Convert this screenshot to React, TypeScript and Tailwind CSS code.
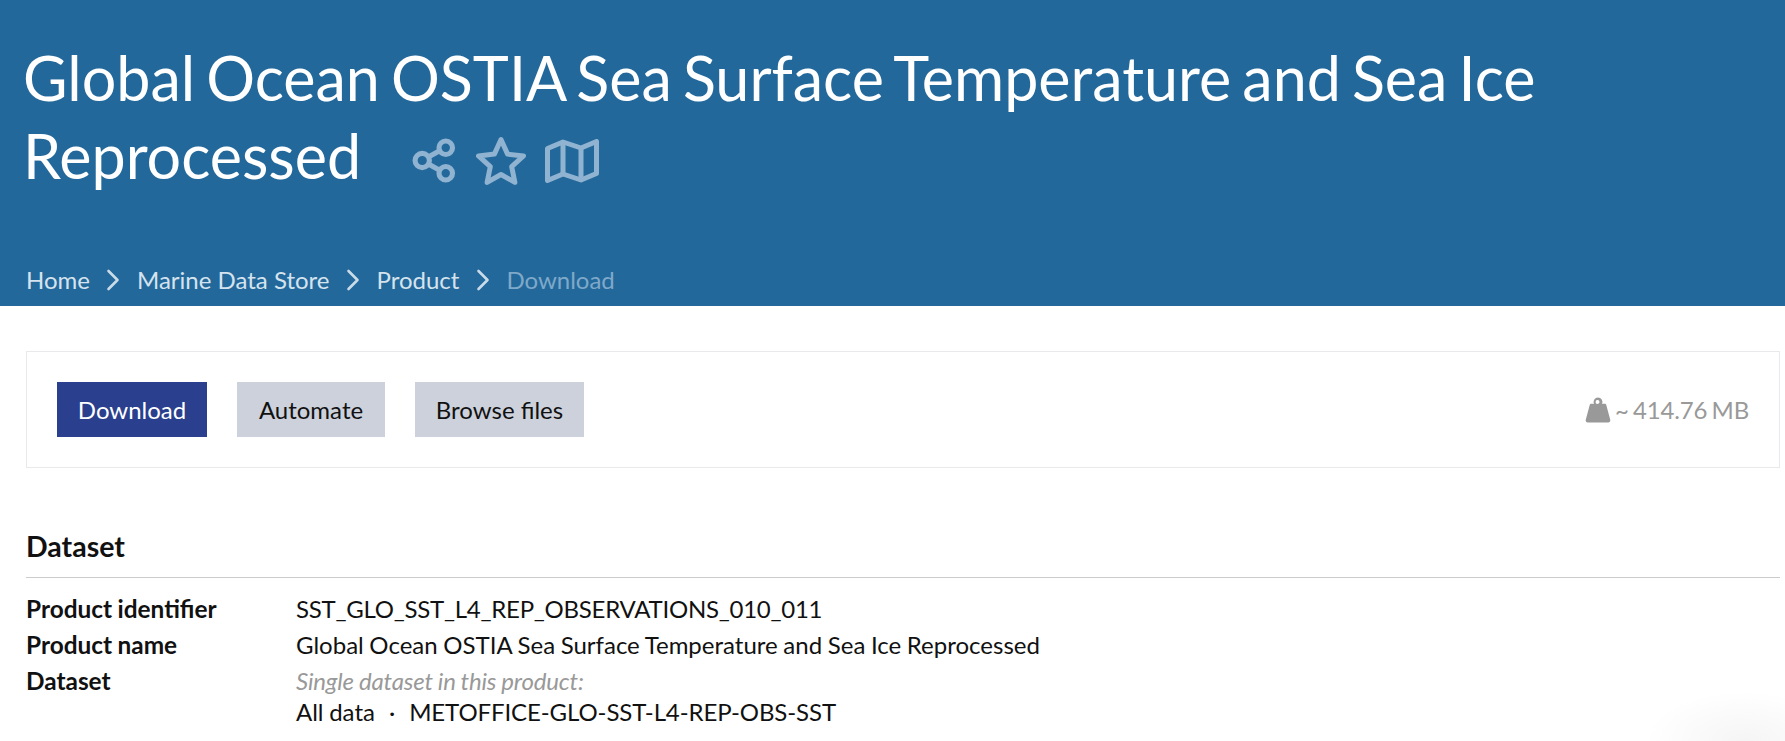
import React from 'react';

const crumbs = ['Home', 'Marine Data Store', 'Product'];

const Chevron = () => (
  <svg width="14" height="24" viewBox="0 0 14 24" fill="none" stroke="#c9dbe9" strokeWidth="2.6" strokeLinecap="round" strokeLinejoin="round" className="mx-[16.5px] shrink-0">
    <path d="M2.500 3l9 9-9 9" />
  </svg>
);

const ShareIcon = () => (
  <svg width="45" height="45" viewBox="0 0 44 44" fill="none" stroke="#8fb3d0" strokeWidth="5">
    <circle cx="10" cy="22" r="7" />
    <circle cx="33" cy="9.500" r="6.600" />
    <circle cx="33" cy="34.500" r="6.600" />
    <path d="M16 18.500l11-6M16 25.500l11 6" />
  </svg>
);

const StarIcon = () => (
  <svg width="50" height="50" viewBox="0 0 50 50" fill="none" stroke="#8fb3d0" strokeWidth="5" strokeLinejoin="round">
    <path d="M25 3.500l6.600 14.600 15.900 1.800-11.800 10.800 3.200 15.700L25 38.500l-13.900 7.900 3.200-15.700L2.500 19.900l15.900-1.800z" />
  </svg>
);

const MapIcon = () => (
  <svg width="54" height="44" viewBox="0 0 54 44" fill="none" stroke="#8fb3d0" strokeWidth="5" strokeLinejoin="round">
    <path d="M2.500 9.500L18 3l18 6 15.500-6.500v32L36 41l-18-6-15.500 6.500z" />
    <path d="M18 3v32M36 9v32" />
  </svg>
);

const WeightIcon = () => (
  <svg width="26" height="26" viewBox="0 0 24 24" fill="#999999">
    <path d="M12 0.500a4 4 0 0 1 3.600 5.800h2.600c.7 0 1.300.5 1.500 1.200l3.600 13.400c.4 1.400-.6 2.600-2 2.600H2.700c-1.400 0-2.400-1.200-2-2.600L4.300 7.500c.2-.7.8-1.200 1.500-1.200h2.600A4 4 0 0 1 12 .5zm0 2.300a1.800 1.800 0 1 0 0 3.500 1.800 1.800 0 0 0 0-3.500z" />
  </svg>
);

const App: React.FC = () => {
  return (
    <div className="relative h-[741px] overflow-hidden bg-white font-['Lato',sans-serif] text-[#111111]">
      <header className="flex h-[306px] flex-col bg-[#23689b] pl-[23px] pr-[100px] text-white">
        <h1 className="mt-[39px] text-[61px] leading-[78px] font-normal [word-spacing:-4.500px]">
          Global Ocean OSTIA Sea Surface Temperature and Sea Ice Reprocessed
          <span className="ml-[51px] inline-flex h-[50px] translate-y-[4px] items-center gap-[19px]">
            <ShareIcon />
            <StarIcon />
            <MapIcon />
          </span>
        </h1>
        <nav className="mt-auto mb-[10px] flex items-center pl-[3px] text-[24px] leading-[32px] text-[#d5e3ee]">
          {crumbs.map(c => (
            <React.Fragment key={c}>
              <span>{c}</span>
              <Chevron />
            </React.Fragment>
          ))}
          <span className="text-[#7fa9c9]">Download</span>
        </nav>
      </header>

      <main className="pl-[26px] pr-[5px]">
        <section className="mt-[45px] flex h-[117px] items-center justify-between border border-[#e9e9ec] px-[30px]">
          <div className="flex gap-[30px] text-[24px] [word-spacing:-1.500px]">
            <button className="h-[55px] w-[150px] bg-[#2a3f8d] text-white">Download</button>
            <button className="h-[55px] w-[148px] bg-[#cdd1dc]">Automate</button>
            <button className="h-[55px] w-[169px] bg-[#cdd1dc]">Browse files</button>
          </div>
          <div className="flex items-center gap-[4px] text-[24px] tracking-[-0.2px] text-[#999999] [word-spacing:-1.500px]">
            <WeightIcon />
            <span>~ 414.76 MB</span>
          </div>
        </section>

        <h2 className="mt-[60px] border-b border-[#cccccc] pb-[13px] text-[28.500px] leading-[36px] font-bold [word-spacing:-1.500px]">Dataset</h2>

        <dl className="mt-[13px] grid grid-cols-[270px_1fr] text-[24px] leading-[36px] [word-spacing:-0.500px]">
          <dt className="text-[24.400px] font-bold">Product identifier</dt>
          <dd className="tracking-[-0.25px]">SST_GLO_SST_L4_REP_OBSERVATIONS_010_011</dd>
          <dt className="text-[24.400px] font-bold">Product name</dt>
          <dd>Global Ocean OSTIA Sea Surface Temperature and Sea Ice Reprocessed</dd>
          <dt className="text-[24.400px] font-bold">Dataset</dt>
          <dd className="pt-[2px]">
            <p className="italic leading-[31px] tracking-[-0.15px] text-[#999999]">Single dataset in this product:</p>
            <p className="flex leading-[31px]">
              <span>All data</span>
              <span className="mx-[14px]">·</span>
              <span className="tracking-[-0.1px]">METOFFICE-GLO-SST-L4-REP-OBS-SST</span>
            </p>
          </dd>
        </dl>
      </main>

      <div className="absolute -right-[60px] -bottom-[50px] h-[100px] w-[200px] rounded-full bg-[radial-gradient(closest-side,#f5f5f5,#ffffff)]" />
    </div>
  );
};

export default App;
